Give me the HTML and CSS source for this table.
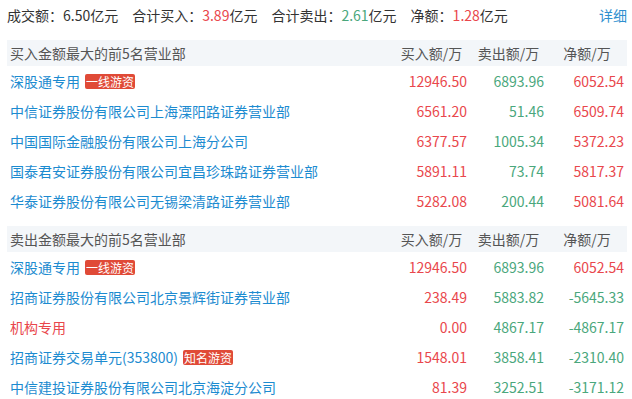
FILE: index.html
```html
<!DOCTYPE html>
<html lang="zh-CN">
<head>
<meta charset="utf-8">
<link rel="stylesheet" href="styles.css">
</head>
<body>
<div class="page">
  <div class="summary">
    <div class="stats">
      <span class="stat">成交额：6.50亿元</span>
      <span class="stat">合计买入：<span class="up">3.89</span>亿元</span>
      <span class="stat">合计卖出：<span class="down">2.61</span>亿元</span>
      <span class="stat">净额：<span class="up">1.28</span>亿元</span>
    </div>
    <a class="detail">详细</a>
  </div>

  <div class="table">
    <div class="head">
      <div class="name">买入金额最大的前5名营业部</div>
      <div class="hcol">买入额/万</div>
      <div class="hcol">卖出额/万</div>
      <div class="hcol">净额/万</div>
    </div>
    <div class="row">
      <div class="name"><span class="link">深股通专用</span><span class="tag">一线游资</span></div>
      <div class="num up">12946.50</div><div class="num down">6893.96</div><div class="num up">6052.54</div>
    </div>
    <div class="row">
      <div class="name"><span class="link">中信证券股份有限公司上海溧阳路证券营业部</span></div>
      <div class="num up">6561.20</div><div class="num down">51.46</div><div class="num up">6509.74</div>
    </div>
    <div class="row">
      <div class="name"><span class="link">中国国际金融股份有限公司上海分公司</span></div>
      <div class="num up">6377.57</div><div class="num down">1005.34</div><div class="num up">5372.23</div>
    </div>
    <div class="row">
      <div class="name"><span class="link">国泰君安证券股份有限公司宜昌珍珠路证券营业部</span></div>
      <div class="num up">5891.11</div><div class="num down">73.74</div><div class="num up">5817.37</div>
    </div>
    <div class="row">
      <div class="name"><span class="link">华泰证券股份有限公司无锡梁清路证券营业部</span></div>
      <div class="num up">5282.08</div><div class="num down">200.44</div><div class="num up">5081.64</div>
    </div>
  </div>

  <div class="table">
    <div class="head">
      <div class="name">卖出金额最大的前5名营业部</div>
      <div class="hcol">买入额/万</div>
      <div class="hcol">卖出额/万</div>
      <div class="hcol">净额/万</div>
    </div>
    <div class="row">
      <div class="name"><span class="link">深股通专用</span><span class="tag">一线游资</span></div>
      <div class="num up">12946.50</div><div class="num down">6893.96</div><div class="num up">6052.54</div>
    </div>
    <div class="row">
      <div class="name"><span class="link">招商证券股份有限公司北京景辉街证券营业部</span></div>
      <div class="num up">238.49</div><div class="num down">5883.82</div><div class="num down">-5645.33</div>
    </div>
    <div class="row">
      <div class="name"><span class="link inst">机构专用</span></div>
      <div class="num up">0.00</div><div class="num down">4867.17</div><div class="num down">-4867.17</div>
    </div>
    <div class="row">
      <div class="name"><span class="link">招商证券交易单元(353800)</span><span class="tag">知名游资</span></div>
      <div class="num up">1548.01</div><div class="num down">3858.41</div><div class="num down">-2310.40</div>
    </div>
    <div class="row">
      <div class="name"><span class="link">中信建投证券股份有限公司北京海淀分公司</span></div>
      <div class="num up">81.39</div><div class="num down">3252.51</div><div class="num down">-3171.12</div>
    </div>
  </div>
</div>
</body>
</html>
```

FILE: styles.css
```css
html, body {
  margin: 0;
  padding: 0;
  background: #ffffff;
}

body {
  font-family: "Noto Sans CJK SC", "Noto Sans", sans-serif;
  font-size: 14px;
  color: #333333;
}

.page {
  padding: 0 5px 0 7px;
}

.summary {
  display: flex;
  justify-content: space-between;
  align-items: center;
  height: 30px;
  margin-bottom: 10px;
}

.stats {
  display: flex;
  gap: 14px;
}

.detail {
  color: #2f8fcf;
  cursor: pointer;
}

.up { color: #e9474c; }
.down { color: #4aa77c; }

.table {
  margin-bottom: 10px;
}

.head, .row {
  display: grid;
  grid-template-columns: 1fr 77px 77px 80px;
  align-items: center;
}

.head {
  height: 26px;
  background: #f3f6f9;
  color: #555555;
}

.head .name {
  padding-left: 3px;
}

.hcol {
  text-align: center;
}

.row {
  height: 30px;
}

.row .name {
  display: flex;
  align-items: center;
  padding-left: 3px;
}

.link {
  color: #1c8bd0;
}

.link.inst {
  color: #e9474c;
}

.tag {
  margin-left: 5px;
  background: #e04a37;
  color: #ffffff;
  font-size: 12px;
  line-height: 15px;
  padding: 0 1px;
  border-radius: 2px;
}

.num {
  text-align: right;
  padding-right: 3px;
}
```
